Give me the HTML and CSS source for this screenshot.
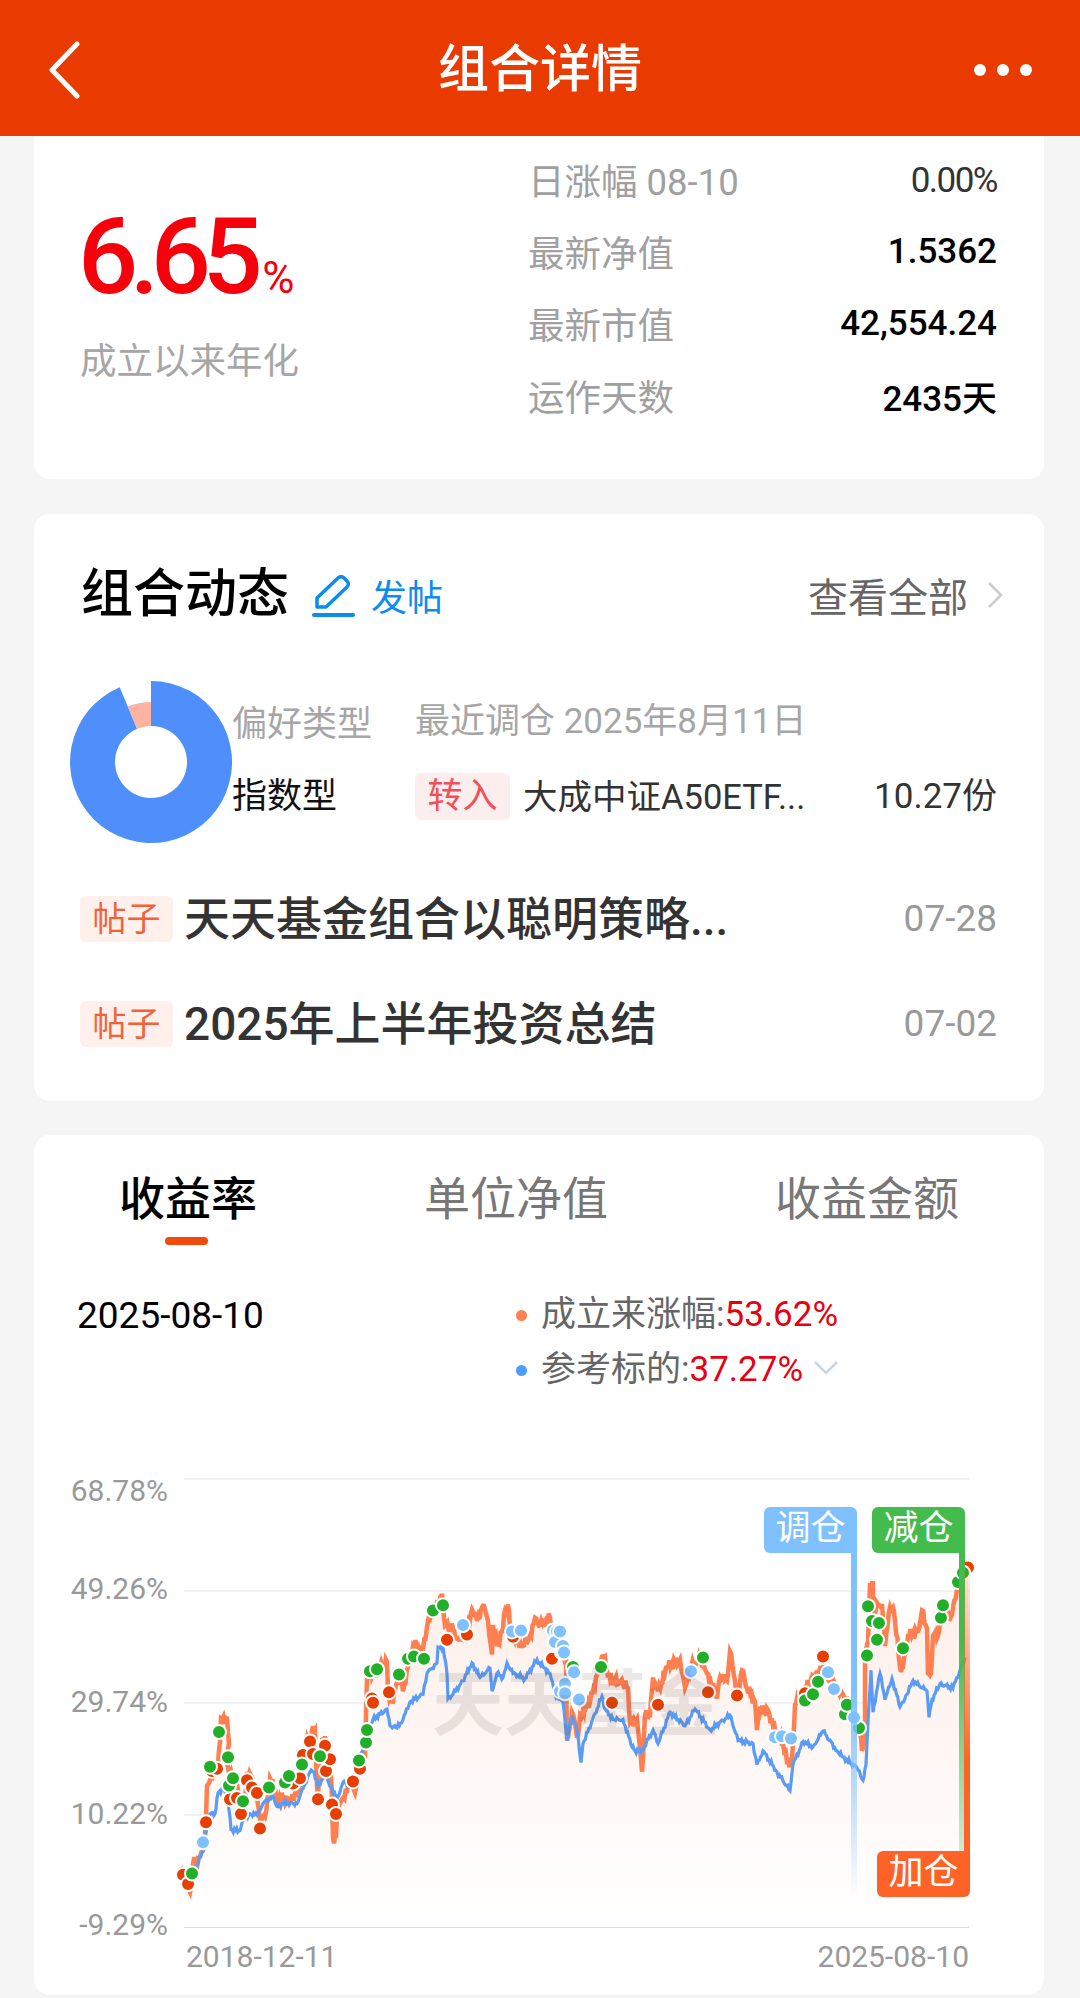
FILE: index.html
```html
<!doctype html>
<html>
  <head>
    <meta charset="utf-8">
    <title>组合详情</title>
    <link rel="stylesheet" href="styles.css">
  </head>
  <body>
    <div class="topbar">
      <svg class="back" width="32" height="58" viewBox="0 0 32 58"><path d="M29 3 L4 29 L29 55" fill="none" stroke="#fff" stroke-width="5" stroke-linecap="round" stroke-linejoin="round"/></svg>
      <div class="topbar-title">组合详情</div>
      <div class="more"><i></i><i></i><i></i></div>
    </div>

    <div class="card card-summary">
      <div class="annual">
        <div class="annual-num">6.65<small>%</small></div>
        <div class="annual-label">成立以来年化</div>
      </div>
      <div class="stats">
        <div class="stat"><span>日涨幅 08-10</span><b class="soft">0.00%</b></div>
        <div class="stat"><span>最新净值</span><b>1.5362</b></div>
        <div class="stat"><span>最新市值</span><b>42,554.24</b></div>
        <div class="stat"><span>运作天数</span><b>2435天</b></div>
      </div>
    </div>

    <div class="card card-news">
      <div class="news-head">
        <div class="news-title">组合动态</div>
        <svg class="pen" width="44" height="42" viewBox="0 0 44 42"><path d="M5 23 L26 3 a4 4 0 0 1 6 0 l3 3 a4 4 0 0 1 0 6 L14 32 H5 Z" fill="none" stroke="#0a8cf0" stroke-width="3.5" stroke-linejoin="round"/><rect x="0" y="38" width="43" height="4" rx="2" fill="#0a8cf0"/></svg>
        <div class="news-post">发帖</div>
        <div class="news-all">查看全部</div>
        <svg class="news-arrow" width="16" height="28" viewBox="0 0 16 28"><path d="M2 2 L14 14 L2 26" fill="none" stroke="#ccc" stroke-width="2.5"/></svg>
      </div>
      <div class="hold">
        <svg class="donut" width="162" height="162" viewBox="0 0 162 162">
          <path d="M81 0 A81 81 0 1 1 49.7 6.3 L67.1 47.8 A36 36 0 1 0 81 45 Z" fill="#4f8ffb"/>
          <path d="M81 21 A60 60 0 0 0 57.8 25.6 L67.1 47.8 A36 36 0 0 1 81 45 Z" fill="#ffb3a0"/>
        </svg>
        <div class="hold-type">
          <div class="muted">偏好类型</div>
          <div class="type-val">指数型</div>
        </div>
        <div class="hold-change">
          <div class="muted">最近调仓 2025年8月11日</div>
          <div class="change-row">
            <span class="tag-in">转入</span>
            <span class="change-name">大成中证A50ETF...</span>
            <span class="change-num">10.27份</span>
          </div>
        </div>
      </div>
      <div class="post">
        <span class="tag-post">帖子</span>
        <span class="post-title">天天基金组合以聪明策略...</span>
        <span class="post-date">07-28</span>
      </div>
      <div class="post">
        <span class="tag-post">帖子</span>
        <span class="post-title">2025年上半年投资总结</span>
        <span class="post-date">07-02</span>
      </div>
    </div>

    <div class="card card-chart">
      <div class="tabs">
        <div class="tab current">收益率</div>
        <div class="tab">单位净值</div>
        <div class="tab">收益金额</div>
      </div>
      <div class="meta">
        <div class="meta-date">2025-08-10</div>
        <div class="legend">
          <div class="legend-row"><i class="orange"></i>成立来涨幅:<em>53.62%</em></div>
          <div class="legend-row"><i class="blue"></i>参考标的:<em>37.27%</em>
            <svg class="legend-arrow" width="24" height="14" viewBox="0 0 24 14"><path d="M1 1 L12 12 L23 1" fill="none" stroke="#cdd5e4" stroke-width="2.5"/></svg>
          </div>
        </div>
      </div>
      <div class="chart">
        <svg id="plot" width="1012" height="535" viewBox="34 1460 1012 535">
          <defs>
            <linearGradient id="area" x1="0" y1="0" x2="0" y2="1">
              <stop offset="0" stop-color="#fdeee8"/>
              <stop offset="1" stop-color="#fff"/>
            </linearGradient>
          </defs>
          <g class="grid">
            <line x1="184" x2="969" y1="1479" y2="1479"/>
            <line x1="184" x2="969" y1="1591" y2="1591"/>
            <line x1="184" x2="969" y1="1703" y2="1703"/>
            <line x1="184" x2="969" y1="1815" y2="1815"/>
          </g>
          <line class="axis" x1="184" x2="969" y1="1927" y2="1927"/>
          <g class="ylabels">
            <text x="168" y="1501">68.78%</text>
            <text x="168" y="1599">49.26%</text>
            <text x="168" y="1712">29.74%</text>
            <text x="168" y="1824">10.22%</text>
            <text x="168" y="1935">-9.29%</text>
          </g>
          <text class="xlabel" x="186" y="1967">2018-12-11</text>
          <text class="xlabel" x="969" y="1967" text-anchor="end">2025-08-10</text>
        </svg>
        <div class="watermark">天天基金</div>
        <div class="flag flag-adjust">调仓<i></i></div>
        <div class="flag flag-sell">减仓<i></i></div>
        <div class="flag flag-buy">加仓<i></i></div>
      </div>
    </div>
    <script src="chart.js"></script>
  </body>
</html>
```

FILE: styles.css
```css
* {box-sizing: border-box;}

body {
  margin: 0;
  width: 1080px;
  height: 1998px;
  overflow: hidden;
  background: #f5f5f5;
  font-family: Roboto, "Noto Sans CJK SC", sans-serif;
  color: #333;
}

.topbar {
  height: 136px;
  background: #e93a00;
  color: #fff;
  display: flex;
  align-items: center;
  justify-content: center;
  position: relative;
}
.topbar-title {font-size: 51px; font-weight: 500; line-height: 60px; margin-top: 4px;}
.back {position: absolute; left: 48px; top: 41px;}
.more {position: absolute; right: 48px; top: 64px; display: flex; gap: 11px;}
.more i {width: 12px; height: 12px; border-radius: 50%; background: #fff;}

.card {
  width: 1010px;
  margin: 0 0 0 34px;
  background: #fff;
  border-radius: 16px;
}

/* summary */
.card-summary {
  height: 343px;
  border-radius: 0 0 16px 16px;
  display: flex;
  padding: 7px 47px 0 47px;
}
.annual {width: 447px; padding-top: 59px;}
.annual-num {
  font-size: 106px;
  font-weight: 500;
  line-height: 110px;
  letter-spacing: -8.5px;
  color: #f5000b;
  white-space: nowrap;
  margin-left: -3px;
}
.annual-num small {font-size: 44px; font-weight: 400; letter-spacing: -1px; margin-left: 8px;}
.annual-label {font-size: 36.5px; line-height: 44px; color: #a6a6a6; margin-top: 7px; margin-left: -1px;}
.stats {flex: 1;}
.stat {
  height: 72px;
  display: flex;
  align-items: center;
  justify-content: space-between;
  font-size: 36.5px;
  color: #a0a0a0;
}
.stat b {font-size: 35px; font-weight: 500; color: #000;}
.stat b.soft {color: #333; font-weight: 400; letter-spacing: -1.5px; margin-top: 2px;}

/* news */
.card-news {height: 587px; margin-top: 35px; padding: 51px 47px 0 47px;}
.news-head {height: 60px; display: flex; align-items: center;}
.news-title {font-size: 52px; font-weight: 500; color: #000; line-height: 60px; width: 231px;}
.pen {margin-top: 2px;}
.news-post {font-size: 36px; color: #0a8cf0; margin-left: 15px;}
.news-all {font-size: 40px; color: #666; margin-left: auto; margin-right: 19px;}
.news-arrow {margin-right: -6px;}

.hold {display: flex; height: 162px; margin-top: 56px;}
.donut {margin-left: -11px; flex: none;}
.muted {color: #a6a6a6;}
.hold-type {width: 183px; padding-top: 24px; font-size: 35px; line-height: 40px;}
.type-val {color: #111; margin-top: 32px;}
.hold-change {flex: 1; padding-top: 21px; font-size: 35px; line-height: 40px;}
.change-row {display: flex; align-items: center; margin-top: 31px; height: 47px;}
.tag-in {
  width: 95px;
  height: 47px;
  line-height: 47px;
  text-align: center;
  font-size: 35px;
  border-radius: 6px;
  background: #fdeeee;
  color: #f0505a;
}
.change-name {margin-left: 13px; color: #333; font-size: 34.5px;}
.change-num {margin-left: auto; color: #333; font-size: 35px;}

.post {display: flex; align-items: center; height: 46px; margin-top: 59px;}
.hold + .post {margin-top: 53px;}
.tag-post {
  width: 93px;
  height: 46px;
  line-height: 46px;
  margin-left: -1px;
  text-align: center;
  font-size: 34px;
  border-radius: 6px;
  background: #fff0ec;
  color: #f0623a;
}
.post-title {margin-left: 11px; font-size: 46px; font-weight: 500; color: #333; line-height: 58px;}
.post-date {margin-left: auto; font-size: 37px; color: #999; margin-top: -2px;}

/* chart card */
.card-chart {height: 860px; margin-top: 34px; padding-top: 34px;}
.tabs {display: flex; justify-content: space-between; padding: 0 85px 0 85px;}
.tab {
  font-size: 46px;
  line-height: 60px;
  color: #777;
  position: relative;
  height: 76px;
}
.tab.current {color: #000; font-weight: 500;}
.tab.current::after {
  content: "";
  position: absolute;
  left: 46px;
  top: 68px;
  width: 43px;
  height: 8px;
  border-radius: 4px;
  background: #f04a0c;
}
.meta {
  display: grid;
  grid-template-columns: 438px 1fr;
  padding-left: 43px;
  margin-top: 48px;
  height: 99px;
}
.meta-date {font-size: 37px; line-height: 44px; color: #000; margin-top: 1px;}
.legend {font-size: 35px; color: #666; margin-left: 1px;}
.legend-row {height: 44px; line-height: 44px; display: flex; align-items: center; margin-bottom: 11px;}
.legend-row i {width: 11px; height: 11px; border-radius: 50%; margin: 0 14px 0 0;}
.legend-row em {font-style: normal; color: #e60012;}
.orange {background: #ff7f50;}
.blue {background: #4f9cff;}
.legend-arrow {margin-left: 11px; margin-top: -4px;}

.chart {position: relative; margin-top: 68px; height: 535px;}
#plot {display: block;}
.grid line {stroke: #f1f1f1; stroke-width: 2;}
.axis {stroke: #ddd; stroke-width: 2;}
.ylabels text {font-size: 30px; fill: #999; text-anchor: end;}
.xlabel {font-size: 30px; fill: #999;}

.watermark {
  position: absolute;
  left: 398px;
  top: 209px;
  font-size: 72px;
  line-height: 72px;
  color: rgba(90, 80, 75, 0.13);
  font-weight: 700;
  white-space: nowrap;
}

.flag {
  position: absolute;
  width: 93px;
  height: 46px;
  line-height: 44px;
  text-align: center;
  font-size: 35px;
  color: #fff;
}
.flag i {position: absolute; width: 6px;}
.flag-adjust {left: 730px; top: 47px; background: #7fc0ff; border-radius: 6px 6px 0 6px;}
.flag-adjust i {
  right: 0;
  top: 46px;
  height: 344px;
  background: linear-gradient(#7fc0ff 40%, rgba(127, 192, 255, 0));
}
.flag-sell {left: 838px; top: 47px; background: #44bb4d; border-radius: 6px 6px 0 6px;}
.flag-sell i {
  right: 0;
  top: 46px;
  height: 298px;
  background: linear-gradient(#44bb4d 30%, rgba(68, 187, 77, 0.25));
}
.flag-buy {left: 843px; top: 391px; background: #ff6226; border-radius: 6px 0 6px 6px;}
.flag-buy i {
  right: 0;
  bottom: 46px;
  height: 300px;
  background: linear-gradient(rgba(255, 98, 38, 0), #ff6226 70%);
}
```

FILE: chart.js
```js
// points were read off a 3x crop, y needs stretching to page coords
var sy = function (y) { return 1450 + (y - 1450) * 1.0486; };

var orange = [180,1853, 186,1866, 190,1872, 193,1845, 200,1838, 204,1828, 206,1800, 207,1770, 212,1765, 214,1752, 218,1750, 220,1728, 221,1706, 227,1706, 229,1730, 226,1745, 230,1760, 236,1765, 240,1780, 245,1785, 247,1757, 252,1762, 257,1783, 260,1803, 265,1800, 270,1763, 274,1772, 277,1780, 290,1785, 300,1770, 303,1740, 312,1717, 315,1717, 317,1770, 318,1783, 320,1737, 325,1723, 330,1743, 332,1783, 333,1820, 336,1820, 337,1797, 342,1783, 347,1777, 350,1760, 355,1777, 360,1750, 365,1743, 367,1667, 373,1663, 380,1657, 387,1652, 388,1680, 393,1690, 398,1663, 403,1680, 408,1657, 413,1637, 418,1637, 423,1640, 428,1613, 433,1607, 442,1587, 445,1617, 453,1620, 457,1630, 465,1625, 472,1602, 477,1613, 482,1600, 485,1602, 488,1613, 492,1645, 493,1617, 497,1637, 503,1620, 505,1603, 509,1602, 510,1623, 523,1637, 530,1627, 535,1610, 540,1617, 550,1610, 553,1623, 560,1640, 566,1650, 567,1727, 572,1700, 578,1723, 580,1703, 590,1690, 602,1647, 605,1647, 608,1667, 623,1673, 628,1677, 630,1710, 637,1707, 642,1757, 645,1703, 650,1703, 653,1667, 658,1680, 667,1657, 680,1650, 685,1677, 690,1657, 700,1650, 707,1663, 717,1687, 720,1667, 727,1670, 730,1642, 735,1670, 737,1683, 742,1660, 747,1677, 755,1690, 757,1717, 760,1698, 768,1698, 773,1713, 783,1730, 787,1748, 792,1748, 795,1693, 803,1680, 823,1657, 827,1667, 843,1683, 853,1703, 860,1720, 862,1737, 865,1723, 865,1650, 868,1633, 870,1577, 873,1577, 873,1610, 878,1597, 882,1597, 885,1637, 890,1600, 893,1600, 895,1613, 900,1657, 903,1657, 908,1627, 918,1623, 922,1603, 927,1620, 928,1663, 931,1663, 933,1627, 938,1627, 940,1610, 952,1607, 957,1583, 963,1565, 968,1562];

var blue = [192,1855, 203,1833, 207,1810, 210,1797, 215,1797, 218,1777, 223,1773, 228,1783, 231,1812, 240,1813, 243,1803, 250,1797, 257,1798, 263,1787, 273,1780, 277,1790, 283,1787, 297,1787, 303,1773, 310,1757, 314,1757, 318,1770, 325,1760, 332,1773, 337,1783, 343,1767, 352,1770, 367,1723, 373,1707, 387,1697, 390,1713, 397,1715, 403,1707, 410,1690, 423,1683, 427,1663, 437,1653, 438,1638, 443,1638, 447,1663, 448,1687, 453,1683, 463,1670, 472,1653, 480,1667, 490,1658, 492,1680, 497,1663, 503,1667, 507,1653, 513,1663, 525,1668, 537,1650, 543,1657, 550,1663, 555,1683, 563,1690, 567,1727, 572,1703, 577,1717, 581,1748, 583,1730, 602,1685, 605,1697, 613,1707, 623,1707, 632,1733, 635,1737, 642,1737, 653,1717, 658,1730, 670,1700, 685,1713, 695,1697, 710,1717, 730,1703, 738,1727, 753,1730, 757,1750, 763,1737, 777,1757, 790,1775, 793,1750, 803,1728, 813,1733, 823,1718, 837,1737, 843,1743, 857,1753, 863,1765, 866,1750, 868,1710, 871,1660, 873,1700, 880,1663, 885,1688, 892,1668, 900,1695, 907,1683, 913,1670, 927,1680, 929,1705, 932,1688, 940,1673, 953,1677, 965,1648];

var reds = [968,1562, 183,1855, 188,1864, 206,1805, 212,1756, 217,1754, 230,1783, 237,1782, 241,1797, 247,1765, 252,1772, 257,1777, 260,1811, 293,1768, 300,1763, 303,1741, 310,1728, 313,1740, 318,1783, 325,1732, 326,1756, 330,1745, 332,1788, 336,1797, 353,1766, 360,1754, 372,1687, 373,1691, 389,1681, 447,1631, 467,1626, 513,1628, 552,1649, 612,1691, 658,1693, 708,1681, 737,1684, 805,1682, 823,1647];

var greens = [192,1854, 210,1752, 219,1719, 228,1743, 229,1770, 233,1763, 243,1785, 269,1772, 285,1767, 289,1761, 302,1750, 320,1742, 359,1746, 366,1729, 367,1717, 370,1661, 377,1659, 399,1664, 408,1649, 414,1647, 424,1649, 433,1603, 443,1598, 573,1657, 601,1657, 703,1648, 805,1689, 813,1683, 818,1671, 845,1702, 847,1693, 859,1715, 867,1646, 868,1599, 872,1613, 879,1615, 877,1631, 903,1639, 941,1610, 943,1598, 958,1576, 963,1567];

var blues = [203,1824, 463,1617, 512,1623, 521,1622, 553,1622, 557,1623, 555,1633, 562,1643, 560,1680, 560,1623, 563,1637, 564,1643, 565,1673, 565,1682, 574,1662, 579,1688, 691,1661, 775,1724, 782,1723, 791,1725, 828,1662, 834,1678, 854,1705];

var plot = document.getElementById('plot');
var NS = 'http://www.w3.org/2000/svg';

function add(name, attrs) {
  var el = document.createElementNS(NS, name);
  for (var k in attrs) el.setAttribute(k, attrs[k]);
  plot.appendChild(el);
  return el;
}

// fills in the daily wobble between the points above
function rough(pts, amp) {
  var out = [];
  for (var i = 0; i < pts.length - 2; i += 2) {
    var x0 = pts[i], y0 = sy(pts[i + 1]), x1 = pts[i + 2], y1 = sy(pts[i + 3]);
    var n = Math.max(1, Math.round((x1 - x0) / 1.2));
    for (var j = 0; j < n; j++) {
      var t = j / n;
      var w = j == 0 ? 0 : (Math.sin(x0 * 7.3 + j * 2.9) + Math.sin(j * 5.1 + i)) * amp;
      out.push((x0 + (x1 - x0) * t).toFixed(1) + ',' + (y0 + (y1 - y0) * t + w).toFixed(1));
    }
  }
  out.push(pts[pts.length - 2] + ',' + sy(pts[pts.length - 1]).toFixed(1));
  return out;
}

var line = rough(orange, 3);
add('polygon', {points: '180,1927 ' + line.join(' ') + ' 968,1927', fill: 'url(#area)'});
add('polyline', {points: line.join(' '), fill: 'none', stroke: '#ff7f50', 'stroke-width': 4.5});
add('polyline', {points: rough(blue, 1.3).join(' '), fill: 'none', stroke: '#5a9cf5', 'stroke-width': 3.2});

function dots(pts, color) {
  for (var i = 0; i < pts.length; i += 2) {
    add('circle', {cx: pts[i], cy: sy(pts[i + 1]).toFixed(1), r: 7, fill: color, stroke: '#fff', 'stroke-width': 2});
  }
}
dots(reds, '#e83e00');
dots(greens, '#21ae28');
dots(blues, '#7fc0ff');
```
